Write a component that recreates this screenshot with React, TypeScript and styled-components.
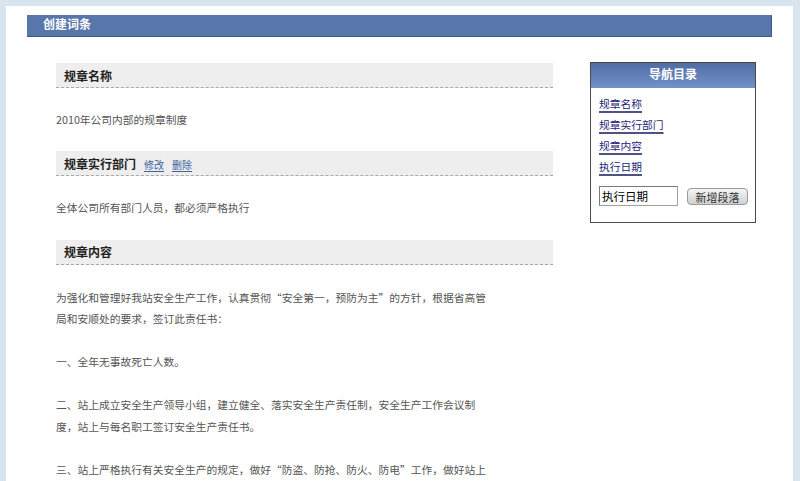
import React from "react";
import styled, { createGlobalStyle } from "styled-components";

const FONT = `"Liberation Sans", "Noto Sans CJK SC", sans-serif`;
const CJK_FONT = `"Noto Sans CJK SC", "Liberation Sans", sans-serif`;

const GlobalStyle = createGlobalStyle`
  html, body {
    margin: 0;
    padding: 0;
    background: #d8e4ee;
    font-family: ${FONT};
  }
`;

/* page frame */

const Panel = styled.div`
  margin: 6px 7px 0 6px;
  min-height: 475px;
  background: #ffffff;
  padding: 9px 21px 0 21px;
  box-sizing: border-box;
`;

const TitleBar = styled.div`
  height: 22px;
  background: #5876aa;
  border-bottom: 1px solid #3f5b8c;
  border-right: 1px solid #3f5b8c;
  box-sizing: border-box;
  color: #ffffff;
  font-size: 12px;
  font-weight: bold;
  line-height: 21px;
  padding-left: 16px;
`;

const Main = styled.div`
  display: flex;
  align-items: flex-start;
  gap: 37px;
  padding: 25px 16px 0 29px;
`;

/* left column */

const Content = styled.div`
  width: 497px;
  margin-top: 1px;
`;

const SectionHead = styled.div`
  display: flex;
  align-items: center;
  gap: 8px;
  height: 24px;
  background: #eeeeee;
  border-bottom: 1px dashed #a8a8a8;
  padding-left: 8px;
`;

const HeadTitle = styled.span`
  font-size: 12px;
  font-weight: bold;
  color: #222222;
`;

const HeadLink = styled.a`
  font-size: 10px;
  color: #3d5f9e;
  text-decoration: underline;
  text-underline-offset: 2px;
  cursor: pointer;
  margin-top: 2px;
`;

const Text = styled.p<{ $gap?: number }>`
  margin: ${(p) => p.$gap ?? 21}px 0;
  font-family: ${CJK_FONT};
  font-size: 10.75px;
  line-height: 21.3px;
  color: #555555;
  white-space: nowrap;

  &:last-child {
    margin-bottom: 0;
  }
`;

/* right nav */

const NavBox = styled.div`
  width: 166px;
  border: 1px solid #4a4a4a;
  box-sizing: border-box;
  background: #ffffff;
`;

const NavHead = styled.div`
  height: 25px;
  background: linear-gradient(#4f6da4, #7392c7);
  color: #ffffff;
  font-size: 12px;
  font-weight: bold;
  line-height: 25px;
  text-align: center;
`;

const NavBody = styled.div`
  display: flex;
  flex-direction: column;
  align-items: flex-start;
  padding: 6px 8px 16px 8px;
`;

const NavLink = styled.a`
  font-size: 10.75px;
  line-height: 21px;
  color: #1c2678;
  text-decoration: underline;
  text-decoration-color: #4d5384;
  text-decoration-thickness: 1.5px;
  text-underline-offset: 3px;
  cursor: pointer;
`;

const AddRow = styled.div`
  display: flex;
  align-items: center;
  gap: 9px;
  margin-top: 8px;
`;

const NameInput = styled.input`
  width: 79px;
  height: 20px;
  box-sizing: border-box;
  border: 1px solid #a0a0a0;
  border-top-color: #7a7a7a;
  border-left-color: #7a7a7a;
  padding: 0 2px;
  font-family: ${FONT};
  font-size: 11.5px;
  color: #000000;
  outline: none;
`;

const AddButton = styled.button`
  width: 61px;
  height: 17px;
  padding: 0;
  border: 1px solid #9a9a9a;
  border-radius: 4px;
  background: linear-gradient(#f6f6f6, #cfcfcf);
  font-family: ${FONT};
  font-size: 11px;
  color: #333333;
  cursor: pointer;
`;

const sections = [
  { key: "name", title: "规章名称" },
  { key: "dept", title: "规章实行部门" },
  { key: "content", title: "规章内容" },
  { key: "date", title: "执行日期" },
];

// each paragraph kept as its rendered lines
const paragraphs = [
  [
    "为强化和管理好我站安全生产工作，认真贯彻“安全第一，预防为主”的方针，根据省高管",
    "局和安顺处的要求，签订此责任书：",
  ],
  ["一、全年无事故死亡人数。"],
  [
    "二、站上成立安全生产领导小组，建立健全、落实安全生产责任制，安全生产工作会议制",
    "度，站上与每名职工签订安全生产责任书。",
  ],
  ["三、站上严格执行有关安全生产的规定，做好“防盗、防抢、防火、防电”工作，做好站上"],
];

const App: React.FC = () => {
  return (
    <>
      <GlobalStyle />
      <Panel>
        <TitleBar>创建词条</TitleBar>
        <Main>
          <Content>
            <SectionHead>
              <HeadTitle>规章名称</HeadTitle>
            </SectionHead>
            <Text>2010年公司内部的规章制度</Text>

            <SectionHead>
              <HeadTitle>规章实行部门</HeadTitle>
              <HeadLink>修改</HeadLink>
              <HeadLink>删除</HeadLink>
            </SectionHead>
            <Text>全体公司所有部门人员，都必须严格执行</Text>

            <SectionHead>
              <HeadTitle>规章内容</HeadTitle>
            </SectionHead>
            {paragraphs.map((lines, i) => (
              <Text key={i} $gap={22}>
                {lines.map((line, j) => (
                  <React.Fragment key={j}>
                    {j > 0 && <br />}
                    {line}
                  </React.Fragment>
                ))}
              </Text>
            ))}
          </Content>

          <NavBox>
            <NavHead>导航目录</NavHead>
            <NavBody>
              {sections.map((s) => (
                <NavLink key={s.key}>{s.title}</NavLink>
              ))}
              <AddRow>
                <NameInput defaultValue="执行日期" />
                <AddButton>新增段落</AddButton>
              </AddRow>
            </NavBody>
          </NavBox>
        </Main>
      </Panel>
    </>
  );
};

export default App;
